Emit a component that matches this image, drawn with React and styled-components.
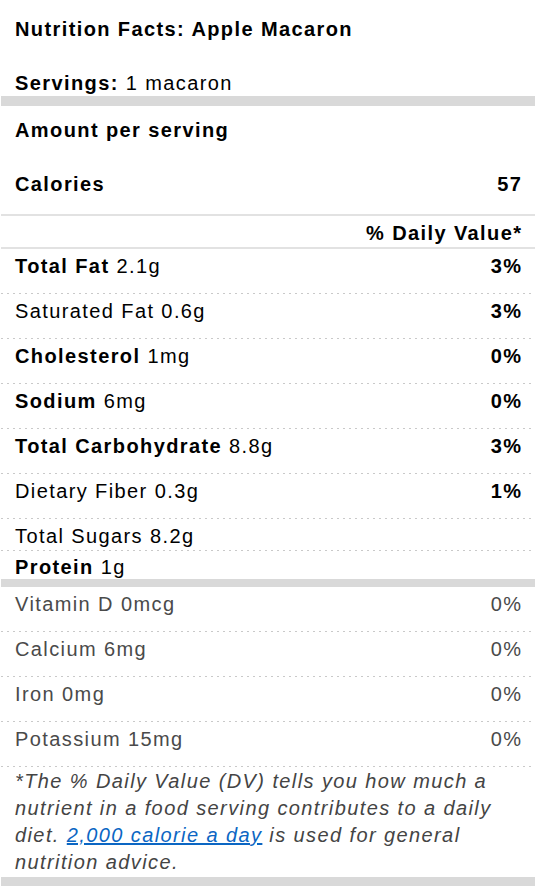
import React from "react";
import styled, { createGlobalStyle } from "styled-components";

const GlobalStyle = createGlobalStyle`
  body {
    margin: 0;
    background: #fff;
    font-family: "Liberation Sans", Arial, Helvetica, sans-serif;
  }
`;

const Card = styled.div`
  width: 534px;
  margin-left: 1px;
  color: #000;
  font-size: 20px;
  letter-spacing: 1.4px;
`;

const Title = styled.h1`
  margin: 0;
  padding: 15px 14px 0;
  font-size: 20px;
  font-weight: bold;
  line-height: 28px;
`;

const Servings = styled.div`
  margin-top: 28px;
  padding: 0 14px 1px;
  line-height: 24px;
`;

const Bar = styled.div`
  height: ${(p) => p.h || 10}px;
  background: #d9d9d9;
`;

const Thin = styled.div`
  height: 2px;
  background: #e2e2e2;
`;

const Heading = styled.div`
  padding: ${(p) => p.pad};
  line-height: 28px;
  font-weight: bold;
  display: flex;
  justify-content: ${(p) => (p.right ? "flex-end" : "space-between")};
`;

const dots =
  "linear-gradient(to right, #c9c9c9 0 2px, transparent 2px) left bottom / 6px 1px repeat-x";

const Row = styled.div`
  display: flex;
  justify-content: space-between;
  padding: 3px 14px 14px;
  line-height: 28px;
  color: ${(p) => (p.muted ? "#4a4a4a" : "#000")};
  background: ${dots};
`;

const FlatRow = styled(Row)`
  padding-bottom: 1px;
`;

const TightRow = styled(Row)`
  padding: 5px 14px 0;
  line-height: 23px;
  background: none;
`;

const Label = styled.span`
  b {
    font-weight: bold;
  }
`;

// right-hand values: cancel the trailing letter-spacing so they sit flush
const Value = styled.span`
  font-weight: ${(p) => (p.light ? "normal" : "bold")};
  margin-right: -1.4px;
`;

const Footnote = styled.p`
  margin: 0;
  padding: 1px 14px 1px;
  font-style: italic;
  line-height: 27px;
  color: #444;
  a {
    color: #0b66c3;
    text-decoration: underline;
  }
`;

const nutrients = [
  { bold: "Total Fat", amt: "2.1g", pct: "3%" },
  { name: "Saturated Fat", amt: "0.6g", pct: "3%" },
  { bold: "Cholesterol", amt: "1mg", pct: "0%" },
  { bold: "Sodium", amt: "6mg", pct: "0%" },
  { bold: "Total Carbohydrate", amt: "8.8g", pct: "3%" },
  { name: "Dietary Fiber", amt: "0.3g", pct: "1%" },
];

const vitamins = [
  ["Vitamin D", "0mcg"],
  ["Calcium", "6mg"],
  ["Iron", "0mg"],
  ["Potassium", "15mg"],
];

export default function App() {
  return (
    <Card>
      <GlobalStyle />
      <Title>Nutrition Facts: Apple Macaron</Title>
      <Servings>
        <b>Servings:</b> 1 macaron
      </Servings>
      <Bar h={10} />
      <Heading pad="10px 14px 0">Amount per serving</Heading>
      <Heading pad="26px 14px 16px">
        <span>Calories</span>
        <Value>57</Value>
      </Heading>
      <Thin />
      <Heading right pad="3px 14px 0">
        <Value>% Daily Value*</Value>
      </Heading>
      <Thin />
      {nutrients.map((n) => (
        <Row key={n.bold || n.name}>
          <Label>
            {n.bold ? <b>{n.bold}</b> : n.name} {n.amt}
          </Label>
          <Value>{n.pct}</Value>
        </Row>
      ))}
      <FlatRow>
        <Label>Total Sugars 8.2g</Label>
      </FlatRow>
      <TightRow>
        <Label>
          <b>Protein</b> 1g
        </Label>
      </TightRow>
      <Bar h={8} />
      {vitamins.map(([name, amt]) => (
        <Row muted key={name}>
          <Label>
            {name} {amt}
          </Label>
          <Value light>0%</Value>
        </Row>
      ))}
      <Footnote>
        *The % Daily Value (DV) tells you how much a nutrient in a food serving
        contributes to a daily diet. <a href="#">2,000 calorie a day</a> is used
        for general nutrition advice.
      </Footnote>
      <Bar h={9} />
    </Card>
  );
}
